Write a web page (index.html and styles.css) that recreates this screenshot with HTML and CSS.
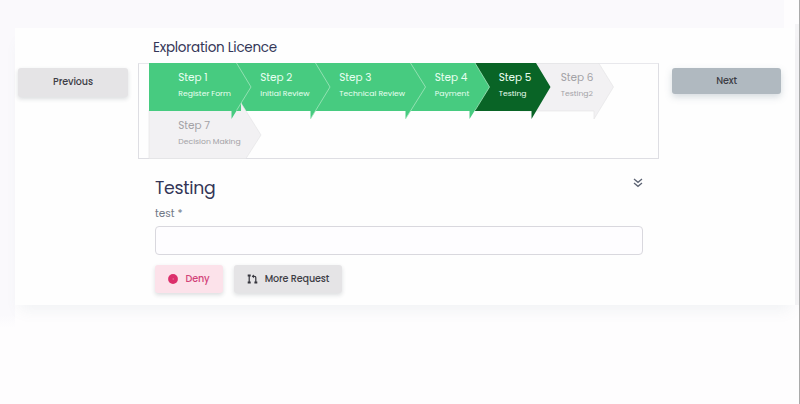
FILE: index.html
```html
<!DOCTYPE html>
<html lang="en">
<head>
<meta charset="utf-8">
<title>Exploration Licence</title>
<link rel="stylesheet" href="styles.css">
</head>
<body>
<div class="page">
  <main class="card">
    <div class="side side-left"><button class="btn btn-prev"><span>Previous</span></button></div>
    <section class="content">
      <h1 class="title"><span>Exploration Licence</span></h1>
      <div class="wizard">
        <svg class="arrows" width="519" height="96" viewBox="139 63 519 96">
          <path class="todo" d="M520 63.500H599L613.500 87L594 119V111H520Z"/>
          <path class="active" d="M475 63H536L550.500 87L531.500 119V111H475Z"/>
          <path class="done" d="M410 63H475L489.500 87L469.500 119V111H410Z"/>
          <path class="done" d="M315 63H410.500L425.500 87L405.500 119V111H315Z"/>
          <path class="done" d="M236 63H315.500L330 87L310.500 119V111H236Z"/>
          <path class="todo" d="M149 110H241V103L261 135L246 158.500H149Z"/>
          <path class="done" d="M149 63H236.500L251 87L241 103V111H236.400L231.500 119V111H149Z"/>
          <path class="edge" d="M236.500 63L251 87L236.500 110.500M315.500 63L330 87L310.500 119M410.500 63L425.500 87L405.500 119M475 63L489.500 87L475 110.500"/>
        </svg>
        <ol class="steps">
          <li class="step"><b>Step 1</b><small>Register Form</small></li>
          <li class="step"><b>Step 2</b><small>Initial Review</small></li>
          <li class="step"><b>Step 3</b><small>Technical Review</small></li>
          <li class="step"><b>Step 4</b><small>Payment</small></li>
          <li class="step"><b>Step 5</b><small>Testing</small></li>
          <li class="step muted"><b>Step 6</b><small>Testing2</small></li>
          <li class="step muted"><b>Step 7</b><small>Decision Making</small></li>
        </ol>
      </div>
      <form class="form">
        <div class="form-head">
          <h2 class="heading"><span>Testing</span></h2>
          <svg class="chevrons" width="10" height="10" viewBox="0 0 10 10"><path d="M1 1L5 4.300L9 1M1 5L5 8.300L9 5"/></svg>
        </div>
        <label class="label" for="test">test *</label>
        <input class="input" id="test" type="text">
        <div class="actions">
          <button type="button" class="btn btn-deny">
            <svg width="10" height="10" viewBox="0 0 10 10"><circle cx="5" cy="5" r="4.900" fill="#dc2f6b"/><circle cx="5.200" cy="5" r=".7" fill="#f27aa3"/></svg>
            <span>Deny</span>
          </button>
          <button type="button" class="btn btn-more">
            <svg width="11" height="10" viewBox="0 0 11 10"><path class="pr" d="M2.200 1.500V8.500M5.500 2.300H7.500Q8.800 2.300 8.800 3.600V8.500"/><path class="pr-dot" d="M.7 .5H3.700V2.400H.7ZM.7 7.600H3.700V9.500H.7ZM7.400 7.600H10.300V9.500H7.400ZM4.700 2.300L6.900 .4V4.200Z"/></svg>
            <span>More Request</span>
          </button>
        </div>
      </form>
    </section>
    <div class="side side-right"><button class="btn btn-next"><span>Next</span></button></div>
  </main>
</div>
</body>
</html>
```
FILE: styles.css
```css
* { box-sizing: border-box; }
body {
  margin: 0;
  background: #fefdfe;
  color: #343657;
  font-family: Poppins, Inter, "Open Sans", sans-serif;
}
.page {
  height: 404px;
  padding: 28px 4px 0 15px;
  border-right: 1px solid #aaa;
  background:
    linear-gradient(#faf9fc, #faf9fc) 0 0 / 784px 28px no-repeat,
    linear-gradient(#faf9fc 96%, #fefdfe) 0 0 / 15px 328px no-repeat,
    linear-gradient(#f5f4f6, #f5f4f6) 795px 24px / 4px 281px no-repeat,
    #fefdfe;
}
.card {
  display: flex;
  height: 277px;
  background: #fefefe;
  box-shadow: 0 10px 14px -5px rgba(100, 130, 140, .09);
}
.side { padding-top: 40px; }
.side-left { width: 123px; padding-left: 3px; }
.side-right { padding-left: 13px; }
.content { width: 521px; }
.title {
  height: 35px;
  margin: 0;
  padding-left: 15px;
  font-size: 13.500px;
  font-weight: 400;
  line-height: 39px;
  letter-spacing: -.25px;
  white-space: nowrap;
}
.wizard {
  position: relative;
  height: 96px;
  border: 1px solid #dedee3;
  border-top-color: #e8e8ec;
}
.arrows { position: absolute; left: 0; top: -1px; }
.done { fill: #47cb80; }
.active { fill: #096426; }
.todo { fill: #f2f1f3; stroke: #e2e2e4; stroke-width: .6; }
.edge { fill: none; stroke: #a4e6be; stroke-width: .8; }
.steps {
  position: relative;
  display: grid;
  grid-template-columns: 82px 79px 95.500px 64px 62px 90px;
  grid-auto-rows: 47.500px;
  margin: 0;
  padding: 0 0 0 39.300px;
  list-style: none;
}
.step { color: #e9fff1; white-space: nowrap; }
.muted { color: #a3a2a6; }
.step b, .step small { display: block; }
.step b { padding-top: 6px; font-size: 10.500px; line-height: 15px; font-weight: 400; letter-spacing: -.1px; }
.step small { padding-top: 3px; font-size: 7.700px; line-height: 12px; font-weight: 400; }
.form { padding: 16px 16px 0 17px; }
.form-head { display: flex; height: 26px; justify-content: space-between; }
.heading { margin: 0; font-size: 17.300px; font-weight: 400; line-height: 26px; letter-spacing: -.3px; }
.chevrons { margin-top: 3px; fill: none; stroke: #5d6474; stroke-width: 1.300; }
.label {
  display: block;
  height: 25px;
  color: #727987;
  font-size: 10.500px;
  font-weight: 400;
  line-height: 26px;
}
.input {
  display: block;
  width: 488px;
  height: 29px;
  border: 1px solid #d9d8de;
  border-radius: 4px;
  background: #fefdff;
}
.actions { display: flex; gap: 11px; padding-top: 10px; }
.btn {
  display: flex;
  align-items: center;
  justify-content: center;
  padding: 0 0 1px;
  border: 0;
  border-radius: 3px;
  font-family: inherit;
  font-size: 9.600px;
  font-weight: 500;
  letter-spacing: -.12px;
  color: #3d3d45;
  background: #e5e4e6;
  box-shadow: 0 2px 4px rgba(40, 50, 60, .16);
  white-space: nowrap;
}
.btn-prev { width: 110px; height: 29px; padding-bottom: 2px; }
.btn-next {
  width: 109px;
  height: 26px;
  background: #b0b9c0;
  box-shadow: 0 3px 7px rgba(90, 115, 130, .25);
}
.btn-deny { width: 68px; height: 28px; gap: 7px; color: #d24379; background: #fce2ea; }
.btn-more { width: 108px; height: 28px; gap: 7px; }
.pr { fill: none; stroke: #35353d; stroke-width: 1.200; }
.pr-dot { fill: #35353d; }
```
